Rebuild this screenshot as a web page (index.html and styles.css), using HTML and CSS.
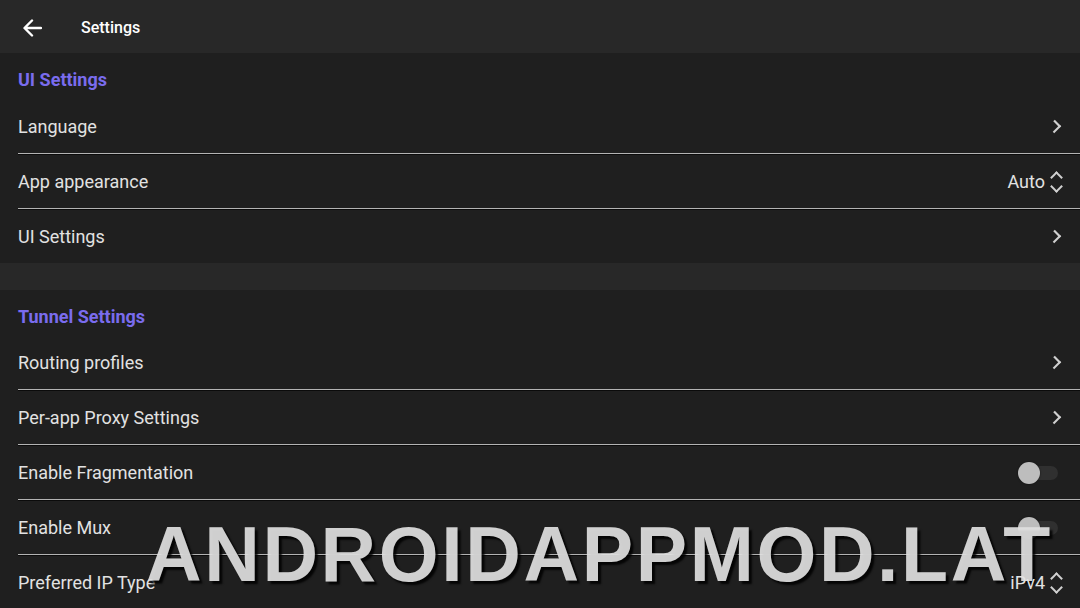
FILE: index.html
```html
<!DOCTYPE html>
<html lang="en">
<head>
    <meta charset="UTF-8">
    <meta name="viewport" content="width=device-width, initial-scale=1.0">
    <title>Settings</title>
    <link rel="stylesheet" href="styles.css">
</head>
<body>
    <header class="topbar">
        <button class="back" aria-label="Back">
            <svg width="20" height="18" viewBox="0 0 20 18"><path d="M19 9H3M10 1.5L2.5 9 10 16.5" fill="none" stroke="#fff" stroke-width="2.4" stroke-linecap="round" stroke-linejoin="round"/></svg>
        </button>
        <span class="title">Settings</span>
    </header>

    <section class="group">
        <h2>UI Settings</h2>
        <div class="row"><span>Language</span><i class="chevron"></i></div>
        <div class="row"><span>App appearance</span><span class="value">Auto<i class="updown"></i></span></div>
        <div class="row"><span>UI Settings</span><i class="chevron"></i></div>
    </section>

    <section class="group">
        <h2>Tunnel Settings</h2>
        <div class="row"><span>Routing profiles</span><i class="chevron"></i></div>
        <div class="row"><span>Per-app Proxy Settings</span><i class="chevron"></i></div>
        <div class="row"><span>Enable Fragmentation</span><span class="toggle"></span></div>
        <div class="row"><span>Enable Mux</span><span class="toggle"></span></div>
        <div class="row"><span>Preferred IP Type</span><span class="value">iPv4<i class="updown"></i></span></div>
    </section>

    <div class="stamp">ANDROIDAPPMOD.LAT</div>
</body>
</html>
```

FILE: styles.css
```css
body {
    margin: 0;
    background: #282828;
    font-family: Roboto, "Noto Sans", sans-serif;
    color: #e2e2e2;
    height: 608px;
    overflow: hidden;
    position: relative;
}

.topbar {
    height: 53px;
    box-sizing: border-box;
    padding-top: 2px;
    display: flex;
    align-items: center;
    background: #282828;
}

.back {
    background: none;
    border: none;
    padding: 0;
    margin-left: 22px;
    width: 20px;
    height: 18px;
    display: flex;
}

.title {
    margin-left: 39px;
    font-size: 16px;
    font-weight: 500;
    color: #fff;
}

.group {
    background: #1f1f1f;
    padding-left: 18px;
    margin-bottom: 27px;
}

.group h2 {
    margin: 0;
    height: 46px;
    box-sizing: border-box;
    display: flex;
    align-items: center;
    padding-top: 6px;
    font-size: 18px;
    font-weight: 700;
    color: #7a6cee;
}

.topbar + .group h2 {
    height: 47px;
}

.row {
    height: 53px;
    display: flex;
    align-items: center;
    justify-content: space-between;
    padding-right: 18px;
    font-size: 18px;
    border-bottom: 1px solid #b3b3b3;
}

.row + .row {
    border-top: 1px solid #0b0b0b;
}

.group .row:last-child {
    border-bottom: none;
}

.chevron {
    width: 7px;
    height: 7px;
    border-right: 2px solid #d0d0d0;
    border-top: 2px solid #d0d0d0;
    transform: rotate(45deg) scaleY(1.1);
    margin-right: 3px;
}

.value {
    position: relative;
    z-index: 1;
    display: flex;
    align-items: center;
    font-size: 18px;
}

.updown {
    width: 14px;
    height: 24px;
    margin-left: 4px;
    margin-right: -1px;
    display: flex;
    flex-direction: column;
    align-items: center;
    justify-content: space-between;
}

.updown::before,
.updown::after {
    content: "";
    width: 7px;
    height: 7px;
    border-left: 2px solid #d0d0d0;
    border-top: 2px solid #d0d0d0;
}

.updown::before {
    transform: translateY(3px) rotate(45deg);
}

.updown::after {
    transform: translateY(-3px) rotate(225deg);
}

.toggle {
    position: relative;
    width: 40px;
    height: 22px;
    margin-right: 4px;
}

.toggle::before {
    content: "";
    position: absolute;
    right: 0;
    top: 4px;
    width: 30px;
    height: 14px;
    border-radius: 7px;
    background: #303030;
}

.toggle::after {
    content: "";
    position: absolute;
    left: 0;
    top: 0;
    width: 22px;
    height: 22px;
    border-radius: 50%;
    background: #bdbdbd;
    box-shadow: 0 0 2px rgba(0, 0, 0, 0.6);
}

.stamp {
    position: absolute;
    left: 146px;
    top: 516px;
    font-family: "Liberation Sans", Arial, sans-serif;
    font-weight: 700;
    font-size: 77px;
    letter-spacing: 2.6px;
    line-height: 1;
    color: rgba(225, 225, 225, 0.92);
    text-shadow: 3px 3px 2px rgba(0, 0, 0, 0.85);
    white-space: nowrap;
}
```
